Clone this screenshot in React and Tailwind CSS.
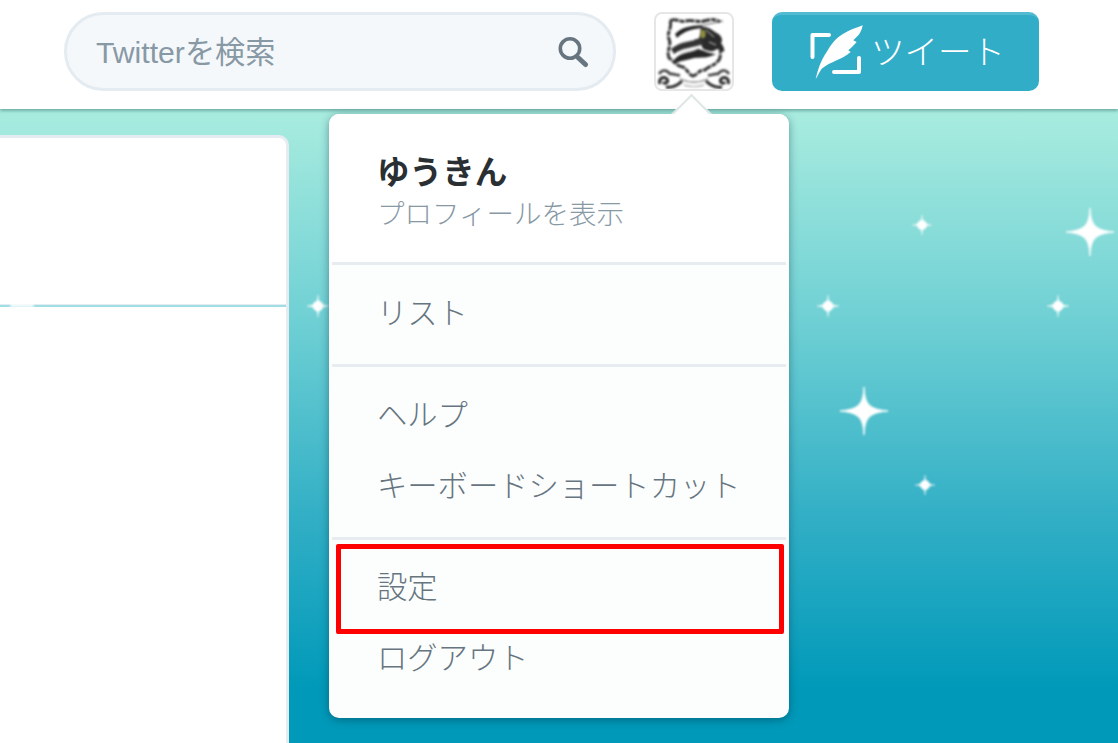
import React from 'react';

const jp = 'font-["Liberation_Sans","Noto_Sans_CJK_JP",sans-serif]';

// sparkles on the page background: [x, y, size]
const sparkles = [
  [922, 225, 20],
  [1090, 232, 48],
  [828, 306, 22],
  [1058, 306, 22],
  [864, 411, 48],
  [925, 485, 20],
  [318, 306, 22],
];

function Sparkle({ x, y, size }) {
  const small = size < 30;
  return (
    <svg
      className="absolute blur-[1px]"
      style={{ left: x - size / 2, top: y - size / 2, width: size, height: size }}
      viewBox="0 0 100 100"
    >
      <path d="M50 0 C52 36 60 46 100 50 C60 54 52 64 50 100 C48 64 40 54 0 50 C40 46 48 36 50 0 Z" fill="#fff" stroke="#fff" strokeWidth="2" />
      <circle cx="50" cy="50" r={small ? 24 : 14} fill="#fff" />
    </svg>
  );
}

function SearchIcon() {
  return (
    <svg width="32" height="34" viewBox="0 0 32 34" fill="none">
      <circle cx="13" cy="13.5" r="9.7" stroke="#66757f" strokeWidth="3.6" />
      <path d="M21.5 23 L28.5 29.5" stroke="#66757f" strokeWidth="5" strokeLinecap="round" />
    </svg>
  );
}

function TweetIcon() {
  return (
    <svg width="54" height="56" viewBox="0 0 54 56" fill="none">
      <path d="M19 10 H2.5 V32" stroke="#fff" strokeWidth="4" strokeLinejoin="round" strokeLinecap="round" />
      <path d="M24 47 H49 V33" stroke="#fff" strokeWidth="4" strokeLinejoin="round" strokeLinecap="round" />
      <path
        d="M5.7 54.3 C8 44 11 35 16.7 27 C21 19 26 13 33.3 8.7 C39 5 46 3 52.7 .3 C52 4 50.5 8 48.3 10.3 L43.3 15.3 L46.7 17 C44 20 41 23 38.3 25.3 L40.7 27 C36 31 31 33.5 26.7 35.3 C21 38 16 40 11.7 43.7 C9.5 47 7.5 51 5.7 54.3 Z"
        fill="#fff"
      />
    </svg>
  );
}

function Crest() {
  return (
    <svg width="76" height="75" viewBox="0 0 76 75" fill="none" className="blur-[0.8px]">
      {/* frame */}
      <path
        d="M14 7 C19 3 24 9 30 7 C36 5 42 9 48 7 C54 5 60 5 64 8 M14 7 C17 13 10 19 13 25 C16 31 10 37 13 44 C18 47 20 52 27 53 C31 55 33 61 37 62 C41 61 44 55 49 56 C53 52 58 52 62 47 C66 44 63 40 65 36"
        stroke="#333"
        strokeWidth="3"
        strokeDasharray="9 1 5 1"
      />
      {/* banner strokes */}
      <path d="M19 20 C26 13 34 12 46 11 L46 14 C36 15 28 17 21 24 Z" fill="#222" />
      <path d="M44 12 L67 7" stroke="#555" strokeWidth="1" />
      {/* horse and rider */}
      <path d="M45 13 C50 12 55 15 59 18 C64 20 68 25 65 29 C67 32 69 35 68 38 L61 35 C56 39 52 37 47 35 L43 26 Z" fill="#2b2b2b" />
      <path d="M15 35 C24 27 36 28 46 23 L47 30 C38 34 27 33 18 40 Z" fill="#333" />
      <path d="M18 46 C25 37 34 40 42 35 C47 36 54 40 60 40 C51 45 44 43 38 44 C32 46 26 46 20 49 Z" fill="#262626" />
      <path d="M24 39 C31 36 38 37 44 33" stroke="#ccc" strokeWidth="1" />
      <path d="M21 30 C27 27 33 27 38 26" stroke="#ddd" strokeWidth="0.8" />
      <ellipse cx="47" cy="20" rx="2.6" ry="4.2" fill="#8f8d3e" />
      <path d="M50 16 L58 23 M53 28 L60 31" stroke="#ddd" strokeWidth="0.9" />
      {/* scrollwork */}
      <path d="M3 60 C7 54 12 57 14 60 C18 59 20 62 24 61" stroke="#444" strokeWidth="2.6" />
      <path d="M73 60 C69 54 64 57 62 60 C58 59 56 62 52 61" stroke="#444" strokeWidth="2.6" />
      <path d="M4 70 C2 64 8 62 11 65 C13 68 9 71 7 68 M10 73 C17 74 22 71 26 67" stroke="#2a2a2a" strokeWidth="3" />
      <path d="M72 70 C74 64 68 62 65 65 C63 68 67 71 69 68 M66 73 C59 74 54 71 50 67" stroke="#2a2a2a" strokeWidth="3" />
      <path d="M24 65 C33 69 43 69 52 65" stroke="#9a9a9a" strokeWidth="1.6" />
      <path d="M28 71 C34 73 42 73 48 71" stroke="#b5b5b5" strokeWidth="1.4" />
    </svg>
  );
}

function MenuItem({ children }) {
  return (
    <div className="h-[71px] flex items-center pl-[48px] pb-[1px] text-[30.3px] leading-none font-light text-[#66757f]">
      {children}
    </div>
  );
}

export default function App() {
  return (
    <div className={`relative w-[1118px] h-[743px] overflow-hidden bg-[linear-gradient(180deg,#a9ecdf_110px,#6fd0d4_320px,#34b0c6_510px,#0099b9_690px)] ${jp}`}>
      {/* top bar */}
      <header className="relative h-[109px] bg-white shadow-[0_2px_3px_rgba(0,60,60,0.35)] flex items-start pt-3 pl-16">
        <div className="w-[552px] h-[79px] rounded-full border-[3px] border-[#e4ebf1] bg-[#f5f8fa] flex items-center justify-between pl-[29px] pr-[24px]">
          <span className="mt-[3px] text-[30.2px] text-[#8899a6] leading-none">Twitterを検索</span>
          <SearchIcon />
        </div>
        <div className="ml-[38px] w-[80px] h-[79px] rounded-[8px] border-[2px] border-[#e6e6e6] bg-white flex items-center justify-center overflow-hidden">
          <Crest />
        </div>
        <button className="ml-[38px] w-[267px] h-[79px] rounded-[10px] bg-[#32adc8] border-t-[3px] border-[#52bbd2] flex items-center pl-[38px] text-white">
          <TweetIcon />
          <span className="ml-[7px] text-[33.5px] font-light leading-none">ツイート</span>
        </button>
      </header>

      {/* left column card */}
      <div className="relative mt-[26px] w-[289px] h-[620px] bg-white rounded-tr-[10px] border-t-[3px] border-r-[3px] border-[#e4ebf1]">
        <div className="mt-[166px] h-[3px] bg-[linear-gradient(180deg,#e4ebf1_33%,#9fdfe3_33%)]" />
        <div className="absolute left-[10px] top-[166px] w-[24px] h-[3px] rounded-full bg-white blur-[1px]" />
      </div>

      {sparkles.map(([x, y, size]) => (
        <Sparkle key={`${x}-${y}`} x={x} y={y} size={size} />
      ))}

      {/* account dropdown */}
      <div className="absolute left-[329px] top-[114px] w-[460px] h-[604px] rounded-[10px] bg-[#fcfefe] shadow-[0_2px_8px_rgba(0,50,70,0.45)]">
        <div className="absolute left-[345px] top-[-13px] w-[35px] h-[35px] rotate-45 bg-white border-l-[2px] border-t-[2px] border-[#dfe6e6]" />
        <div className="relative h-[148px] bg-white rounded-t-[10px] pl-[49px] pt-[38px]">
          <div className="text-[32.6px] font-bold leading-[42px] text-[#292f33] -ml-[1px]">ゆうきん</div>
          <div className="text-[27.5px] font-light leading-[42px] text-[#8899a6] -ml-[1px]">プロフィールを表示</div>
        </div>
        <div className="mx-[3px] h-[3px] bg-[#e6ecf0]" />
        <div className="py-[14px]">
          <MenuItem>リスト</MenuItem>
        </div>
        <div className="mx-[3px] h-[3px] bg-[#e6ecf0]" />
        <div className="py-[14px]">
          <MenuItem>ヘルプ</MenuItem>
          <MenuItem>キーボードショートカット</MenuItem>
        </div>
        <div className="mx-[3px] h-[3px] bg-[#e6ecf0]" />
        <div className="pt-[13px]">
          <MenuItem>設定</MenuItem>
          <MenuItem>ログアウト</MenuItem>
        </div>
        {/* red highlight round the settings row */}
        <div className="absolute left-[7px] top-[430px] w-[448px] h-[90px] border-[5px] border-[#ff0000] rounded-[2px]" />
      </div>
    </div>
  );
}
